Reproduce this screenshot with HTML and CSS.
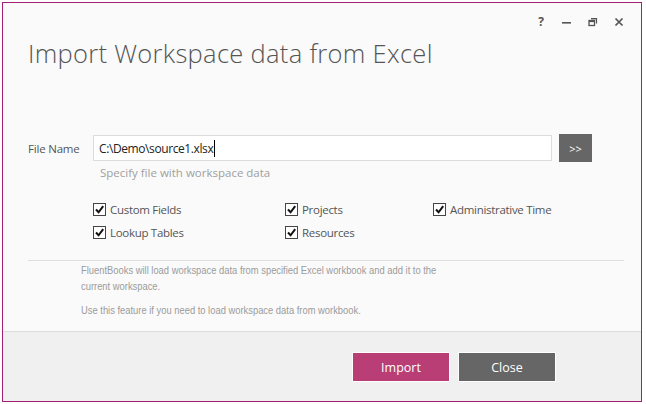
FILE: index.html
```html
<!DOCTYPE html>
<html>
<head>
<meta charset="utf-8">
<link rel="stylesheet" href="styles.css">
</head>
<body>
<div class="window">
  <div class="titlebar">
    <span class="tb-btn tb-help">?</span>
    <span class="tb-btn"><svg width="10" height="10" viewBox="0 0 10 10"><rect x="0" y="5" width="9" height="1.6" fill="#555"/></svg></span>
    <span class="tb-btn"><svg width="10" height="10" viewBox="0 0 10 10"><path d="M3 1.5h5.5v5" fill="none" stroke="#555" stroke-width="1.2"/><rect x="1" y="3.5" width="5.5" height="5" fill="none" stroke="#555" stroke-width="1.3"/><rect x="1" y="3.5" width="5.5" height="1.6" fill="#555"/><rect x="3" y="1" width="5.5" height="1.4" fill="#555"/></svg></span>
    <span class="tb-btn"><svg width="10" height="10" viewBox="0 0 10 10"><path d="M1.5 1.5l7 7M8.5 1.5l-7 7" stroke="#555" stroke-width="1.7"/></svg></span>
  </div>
  <div class="content">
    <h1 class="title">Import Workspace data from Excel</h1>
    <div class="file-row">
      <label class="file-label">File Name</label>
      <div class="file-input"><span class="file-value">C:\Demo\source1.xlsx</span><span class="caret"></span></div>
      <button class="browse">&gt;&gt;</button>
    </div>
    <div class="hint">Specify file with workspace data</div>
    <div class="checks">
      <label class="check"><span class="box"><svg width="11" height="11" viewBox="0 0 11 11"><path d="M2 5.5l2.6 2.8L9.2 2.2" fill="none" stroke="#111" stroke-width="2"/></svg></span>Custom Fields</label>
      <label class="check"><span class="box"><svg width="11" height="11" viewBox="0 0 11 11"><path d="M2 5.5l2.6 2.8L9.2 2.2" fill="none" stroke="#111" stroke-width="2"/></svg></span>Projects</label>
      <label class="check"><span class="box"><svg width="11" height="11" viewBox="0 0 11 11"><path d="M2 5.5l2.6 2.8L9.2 2.2" fill="none" stroke="#111" stroke-width="2"/></svg></span>Administrative Time</label>
      <label class="check"><span class="box"><svg width="11" height="11" viewBox="0 0 11 11"><path d="M2 5.5l2.6 2.8L9.2 2.2" fill="none" stroke="#111" stroke-width="2"/></svg></span>Lookup Tables</label>
      <label class="check"><span class="box"><svg width="11" height="11" viewBox="0 0 11 11"><path d="M2 5.5l2.6 2.8L9.2 2.2" fill="none" stroke="#111" stroke-width="2"/></svg></span>Resources</label>
    </div>
    <div class="separator"></div>
    <div class="notes">
      <p>FluentBooks will load workspace data from specified Excel workbook and add it to the<br>current workspace.</p>
      <p>Use this feature if you need to load workspace data from workbook.</p>
    </div>
  </div>
  <div class="footer">
    <button class="btn btn-import">Import</button>
    <button class="btn btn-close">Close</button>
  </div>
</div>
</body>
</html>
```

FILE: styles.css
```css
html, body {
  margin: 0;
  padding: 0;
  background: #ffffff;
}
body {
  font-family: "Open Sans", "Noto Sans", "DejaVu Sans", sans-serif;
  color: #555;
}
.window {
  box-sizing: border-box;
  width: 640px;
  height: 400px;
  margin: 2px;
  border: 1px solid #a51e72;
  background: #fafafa;
  display: flex;
  flex-direction: column;
}
.titlebar {
  height: 35px;
  display: flex;
  justify-content: flex-end;
  align-items: center;
  padding-right: 17px;
  gap: 16px;
  box-sizing: border-box;
  padding-top: 2px;
}
.tb-btn {
  width: 10px;
  height: 12px;
  display: flex;
  align-items: center;
  justify-content: center;
  font-size: 12px;
  font-weight: 700;
  color: #555;
  line-height: 12px;
}
.content {
  flex: 1;
  padding: 0 17px 0 25px;
}
.title {
  margin: 0;
  font-size: 25.5px;
  font-weight: 300;
  line-height: 30px;
  color: #555;
  letter-spacing: 0.3px;
}
.file-row {
  margin-top: 66px;
  display: flex;
  align-items: center;
  height: 28px;
}
.file-label {
  width: 65px;
  font-size: 11.5px;
  letter-spacing: -0.2px;
}
.file-input {
  box-sizing: border-box;
  width: 459px;
  height: 26px;
  border: 1px solid #dcdcdc;
  background: #fff;
  display: flex;
  align-items: center;
  padding-left: 5px;
  font-size: 12px;
  letter-spacing: -0.4px;
  color: #222;
}
.caret {
  display: inline-block;
  width: 1px;
  height: 17px;
  background: #000;
  margin-left: 1px;
}
.browse {
  margin-left: 7px;
  width: 33px;
  height: 28px;
  border: none;
  background: #666;
  color: #fff;
  font-family: inherit;
  font-size: 11px;
  padding: 0;
}
.hint {
  margin-top: 3px;
  margin-left: 72px;
  font-size: 11.5px;
  line-height: 16px;
  color: #a0a0a0;
}
.checks {
  margin-top: 20px;
  margin-left: 65px;
  display: grid;
  grid-template-columns: 192px 148px 180px;
  grid-auto-rows: 23px;
}
.check {
  display: flex;
  align-items: center;
  font-size: 11.5px;
  letter-spacing: -0.3px;
  color: #555;
  height: 16px;
}
.box {
  box-sizing: border-box;
  width: 13px;
  height: 13px;
  border: 1px solid #444;
  background: #fff;
  margin-right: 4px;
  display: flex;
  align-items: center;
  justify-content: center;
}
.separator {
  margin-top: 13px;
  height: 1px;
  background: #dedede;
}
.notes {
  margin-left: 53px;
  font-family: "Liberation Sans", sans-serif;
  font-size: 11.5px;
  line-height: 16px;
  color: #9a9a9a;
  transform: scaleX(0.815);
  transform-origin: left top;
  width: 560px;
}
.notes p {
  margin: 1px 0 8px;
}
.footer {
  box-sizing: border-box;
  height: 70px;
  border-top: 1px solid #dcdcdc;
  background: #f0f0f0;
  display: flex;
  align-items: flex-start;
  padding-top: 20px;
  padding-left: 349px;
  gap: 8px;
}
.btn {
  box-sizing: border-box;
  width: 98px;
  height: 30px;
  border: 1px solid #fff;
  color: #fff;
  font-family: inherit;
  font-size: 12.5px;
  padding: 0;
}
.btn-import {
  background: #b83e75;
}
.btn-close {
  background: #666;
}
```
